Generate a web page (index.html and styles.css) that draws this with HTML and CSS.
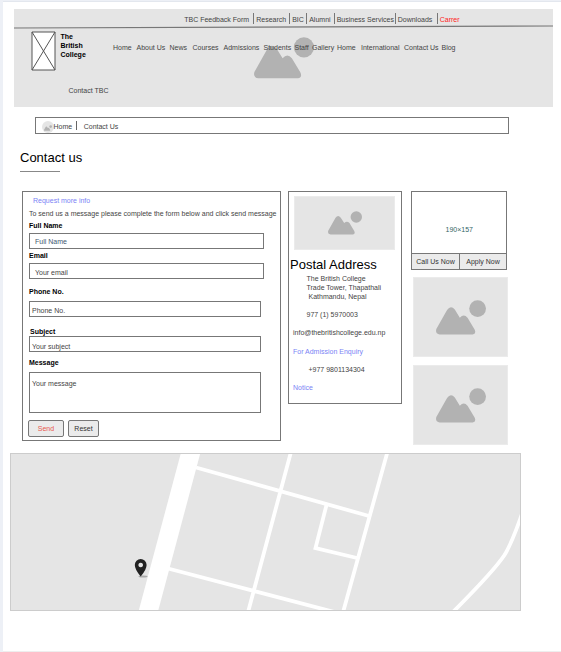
FILE: index.html
```
<!DOCTYPE html>
<html lang="en">
<head>
<meta charset="utf-8">
<title>Contact us - The British College</title>
<link rel="stylesheet" href="styles.css">
</head>
<body>
<svg width="0" height="0" class="defs">
  <symbol id="picture" viewBox="93 345 149 103">
    <path d="M104 447Q90 445 94 431L126 374Q137 359 149 373L164 397Q176 384 187 397L208 432Q214 445 202 447Z"/>
    <circle cx="217" cy="370" r="25"/>
  </symbol>
</svg>
<div class="page">
  <header class="header">
    <svg class="header-picture"><use href="#picture"/></svg>
    <nav class="top-nav">
      <a>TBC Feedback Form</a><a class="sep">Research</a><a class="sep">BIC</a><a class="sep">Alumni</a><a class="sep">Business Services</a><a class="sep">Downloads</a><a class="sep current">Carrer</a>
    </nav>
    <svg class="rule" viewBox="0 0 539 4"><path d="M0 3L539 1"/></svg>
    <div class="brand-row">
      <svg class="logo" viewBox="0 0 25 40"><path d="M1 1H24V39H1ZL24 39M24 1L1 39"/></svg>
      <div class="brand">The<br>British<br>College</div>
      <nav class="main-nav">
        <a>Home</a><a>About Us</a><a>News</a><a>Courses</a><a>Admissions</a><a>Students</a><a>Staff</a><a>Gallery</a><a>Home</a><a>International</a><a>Contact Us</a><a>Blog</a>
      </nav>
    </div>
    <a class="contact-tbc">Contact TBC</a>
  </header>

  <nav class="crumbs">
    <span class="crumb-icon"><svg><use href="#picture"/></svg></span>
    <a>Home</a><i></i><a>Contact Us</a>
  </nav>

  <h1>Contact us</h1>

  <main class="columns">
    <form class="form">
      <p class="accent title">Request more info</p>
      <p class="intro">To send us a message please complete the form below and click send message</p>
      <label class="l-name">Full Name</label>
      <div class="field f-name">Full Name</div>
      <label class="l-email">Email</label>
      <div class="field f-email">Your email</div>
      <label class="l-phone">Phone No.</label>
      <div class="field f-phone">Phone No.</div>
      <label class="l-subject">Subject</label>
      <div class="field f-subject">Your subject</div>
      <label class="l-message">Message</label>
      <div class="field f-message">Your message</div>
      <div class="actions">
        <button type="button" class="send">Send</button>
        <button type="button" class="reset">Reset</button>
      </div>
    </form>

    <section class="address">
      <div class="picture"><svg><use href="#picture"/></svg></div>
      <h2>Postal Address</h2>
      <p class="lines">The British College<br>Trade Tower, Thapathali<br><span>Kathmandu, Nepal</span></p>
      <p class="phone">977 (1) 5970003</p>
      <p>info@thebritishcollege.edu.np</p>
      <p class="accent enquiry">For Admission Enquiry</p>
      <p class="mobile">+977 9801134304</p>
      <p class="accent">Notice</p>
    </section>

    <aside class="side">
      <div class="promo">
        <div class="size">190×157</div>
        <div class="promo-actions"><button type="button">Call Us Now</button><button type="button">Apply Now</button></div>
      </div>
      <div class="picture"><svg><use href="#picture"/></svg></div>
      <div class="picture"><svg><use href="#picture"/></svg></div>
    </aside>
  </main>

  <svg class="map" viewBox="10 453 511 158">
    <g class="roads">
      <path class="avenue" d="M192.500 446L146.500 618"/>
      <path d="M196 467.500L369 516M168 568.500L340 613.500M291.500 450L247 616M388 450L342 616"/>
      <path d="M326.500 505L315.500 548L357 558"/>
      <path d="M523 511Q512 543 504.500 555Q494 571 451 614"/>
    </g>
    <ellipse class="shadow" cx="143" cy="576.500" rx="4.500" ry="1"/>
    <path class="pin" fill-rule="evenodd" d="M140.700 576.500Q134.800 569.500 134.800 565A5.900 5.900 0 0 1 146.600 565Q146.600 569.500 140.700 576.500ZM140.700 562.700a2.300 2.300 0 1 0 .01 0Z"/>
    <rect class="frame" x="10.500" y="453.500" width="510" height="157"/>
  </svg>
</div>
</body>
</html>
```
FILE: styles.css
```
* { box-sizing: border-box; }
body {
  margin: 0;
  background: #edf0f6;
  font: 7px/9px "Liberation Sans", Arial, sans-serif;
  color: #444;
  white-space: nowrap;
}
h1, h2, p { margin: 0; }
h1, h2 { font-weight: 400; font-size: 13px; line-height: 16px; color: #000; }
svg { display: block; }
button { font: inherit; color: #333; background: #ebebeb; border: 1px solid #777; padding: 0; }
.defs { position: absolute; }
.page {
  height: 651px;
  margin: 1px 0 0 3px;
  padding: 8px 0 0 11px;
  background: #fff;
  border-top: 1px solid #e3e7ee;
  border-bottom: 1px solid #eee;
}
.accent { color: #7b83f5; }
.picture { display: flex; background: #e5e5e5; border: 1px solid #ebebeb; }
use { fill: #b2b2b2; }

.header {
  position: relative;
  width: 539px;
  height: 98px;
  margin-top: -1px;
  background: #e5e5e5;
}
.header-picture { position: absolute; left: 240px; top: 28px; width: 60px; height: 42px; }
.top-nav {
  display: grid;
  grid-template-columns: 69px 36px 17px 27.500px 61px 42px 30px;
  height: 16px;
  padding: 4px 0 0 170.200px;
}
.top-nav a { height: 11px; line-height: 13px; }
.top-nav .sep { border-left: 1px solid #777; padding-left: 2px; }
.top-nav .current { color: #f22; }
.rule { width: 539px; height: 4px; fill: none; stroke: #777; stroke-width: 1.200; }
.brand-row { display: flex; align-items: flex-start; padding: 2px 0 0 16.500px; }
.logo { width: 25px; height: 40px; fill: #fff; stroke: #555; stroke-width: 1; }
.brand { margin-left: 5px; width: 52.500px; padding-top: 1px; font-weight: 700; color: #000; }
.main-nav {
  position: relative;
  display: grid;
  grid-template-columns: 23.500px 33px 23px 31px 40px 31px 17.500px 25px 24px 43px 37.500px 20px;
  padding-top: 12px;
}
.contact-tbc { display: block; margin: 15px 0 0 54.500px; }

.crumbs {
  display: flex;
  width: 474px;
  height: 17px;
  margin: 10px 0 0 20.500px;
  border: 1px solid #777;
  padding: 3px 0 0 6px;
}
.crumb-icon { width: 12px; height: 12px; padding: 4px 2px; border-radius: 50%; background: #e5e5e5; }
.crumb-icon svg { width: 8px; height: 6px; }
.crumbs i { width: 1px; height: 9px; margin: 0 7px 0 3.500px; background: #666; }
.crumbs a { padding-top: 1px; }

h1 { margin: 16px 0 0 6px; height: 22px; }
h1::after { content: ""; display: block; width: 40px; height: 1px; margin-top: 5px; background: #888; }

.columns { display: flex; align-items: flex-start; margin: 19px 0 0 8px; }
.form { width: 259px; height: 250px; border: 1px solid #777; padding: 4px 0 0 6px; }
.form .title { margin-left: 4px; }
.intro { margin-top: 4px; }
label { display: block; color: #000; font-weight: 700; }
.l-name { margin-top: 3px; }
.l-email { margin-top: 2px; }
.l-phone { margin-top: 8px; }
.l-subject { margin: 10px 0 0 1px; }
.l-message { margin-top: 6px; }
.field { border: 1px solid #777; width: 232px; height: 16px; padding: 3px 0 0 2px; }
.f-name { width: 235px; margin-top: 3px; padding: 3px 0 0 5px; color: #3f5a70; }
.f-email { width: 235px; margin-top: 3px; padding: 4px 0 0 5px; }
.f-phone { margin-top: 5px; padding-top: 4px; }
.f-subject { padding-top: 5px; }
.f-message { height: 41px; margin-top: 5px; padding-top: 6px; }
.actions { display: flex; gap: 4px; margin: 7px 0 0 -1px; }
.actions button { height: 17px; border-radius: 2px; }
.send { width: 36px; color: #e8584f; }
.reset { width: 31px; }

.address { width: 114px; height: 213px; margin-left: 7px; border: 1px solid #777; padding: 4px 0 0 4px; }
.address .picture { width: 101px; height: 54px; margin-left: 1px; padding: 14px 0 0 32.500px; }
.address .picture svg { width: 34px; height: 24px; }
.address h2 { margin: 7px 0 0 -3px; }
.address .lines { margin: 1px 0 9px 13.500px; }
.lines span { margin-left: 2px; }
.address .phone { margin: 0 0 9px 13.500px; }
.address .enquiry { margin: 10px 0 9px; }
.address .mobile { margin: 0 0 9px 15.500px; }

.side { margin-left: 9px; width: 98px; }
.promo { width: 96px; height: 79px; border: 1px solid #777; }
.size { height: 61px; padding: 33px 0 0 33.500px; color: #366; }
.promo-actions { display: flex; margin: 0 -1px; }
.promo-actions button { width: 49px; height: 17px; }
.promo-actions button + button { margin-left: -1px; width: 48px; }
.side .picture { width: 95px; height: 80px; margin: 7px 0 0 2px; padding: 22px 0 0 22px; }
.side .picture + .picture { margin-top: 8px; }
.side .picture svg { width: 50px; height: 35px; }

.map { width: 511px; height: 158px; margin: 8px 0 0 -4px; background: #e5e5e5; }
.roads { fill: none; stroke: #fff; stroke-width: 3.800; }
.roads .avenue { stroke-width: 18.800; }
.shadow { fill: #aaa; }
.pin { fill: #222; }
.frame { fill: none; stroke: #ccc; }
```
